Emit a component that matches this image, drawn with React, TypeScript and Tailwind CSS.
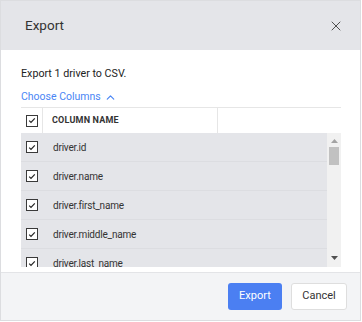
import { X, ChevronUp } from "lucide-react";

const columns = [
  "driver.id",
  "driver.name",
  "driver.first_name",
  "driver.middle_name",
  "driver.last_name",
];

function Checkbox() {
  return (
    <span className="flex h-[12px] w-[12px] items-center justify-center border border-[#3a3a3a] bg-white">
      <svg width="8" height="7" viewBox="0 0 8 7" fill="none">
        <path d="M1.2 3.6 L3 5.4 L6.8 1.4" stroke="#222" strokeWidth="1.2" />
      </svg>
    </span>
  );
}

export default function App() {
  return (
    <div className="flex h-[322px] w-[362px] bg-white font-['Roboto',sans-serif]">
      <div className="flex h-[321px] w-[361px] flex-col border border-[#dcdde0]">
        <div className="flex h-[49px] shrink-0 items-center justify-between bg-[#e4e5e9] pl-[24px] pr-[16px]">
          <h2 className="text-[13.5px] text-[#333]">Export</h2>
          <X size={16} strokeWidth={1.4} className="text-[#444]" />
        </div>

        <div className="flex flex-1 flex-col px-[20px] pt-[16px]">
          <p className="text-[10.7px] leading-[16px] text-[#222]">
            Export 1 driver to CSV.
          </p>

          <button className="mt-[7px] flex items-center gap-[3px] text-[10.5px] leading-[16px] text-[#4a86f5]">
            Choose Columns
            <ChevronUp size={13} strokeWidth={2.2} />
          </button>

          <div className="mt-[2px] w-[320px] border-t border-[#e6e6e6]">
            <div className="flex h-[25px] items-center">
              <div className="flex h-full w-[22px] items-center justify-center border-r border-[#e6e6e6]">
                <Checkbox />
              </div>
              <div className="flex h-full w-[175px] items-center border-r border-[#e6e6e6] pl-[9px] text-[9px] font-bold tracking-[0.2px] text-[#333]">
                COLUMN NAME
              </div>
            </div>

            <div className="flex h-[134px] overflow-hidden">
              <div className="flex-1 bg-[#e4e5e9]">
                {columns.map((column) => (
                  <div
                    key={column}
                    className="flex h-[29px] shrink-0 items-center border-b border-[#dcdde1]"
                  >
                    <div className="flex w-[22px] justify-center">
                      <Checkbox />
                    </div>
                    <span className="pl-[10px] text-[10px] tracking-[-0.2px] text-[#333]">
                      {column}
                    </span>
                  </div>
                ))}
              </div>

              <div className="flex w-[14px] flex-col items-center bg-[#f1f1f1]">
                <svg width="7" height="4" viewBox="0 0 7 4" className="mt-[6px]">
                  <path d="M0 4 L3.5 0 L7 4 Z" fill="#a3a3a3" />
                </svg>
                <div className="mt-[4px] h-[18px] w-[10px] bg-[#c1c1c1]" />
                <div className="flex-1" />
                <svg width="7" height="4" viewBox="0 0 7 4" className="mb-[7px]">
                  <path d="M0 0 L3.5 4 L7 0 Z" fill="#505050" />
                </svg>
              </div>
            </div>
          </div>
        </div>

        <div className="flex h-[48px] shrink-0 items-center justify-end gap-[9px] border-t border-[#e3e4e7] bg-[#f3f4f6] pr-[13px]">
          <button className="h-[27px] w-[54px] rounded-[3px] bg-[#4b7ff2] text-[11px] text-white">
            Export
          </button>
          <button className="h-[27px] w-[56px] rounded-[3px] border border-[#dedede] bg-white text-[11px] text-[#333]">
            Cancel
          </button>
        </div>
      </div>
    </div>
  );
}
